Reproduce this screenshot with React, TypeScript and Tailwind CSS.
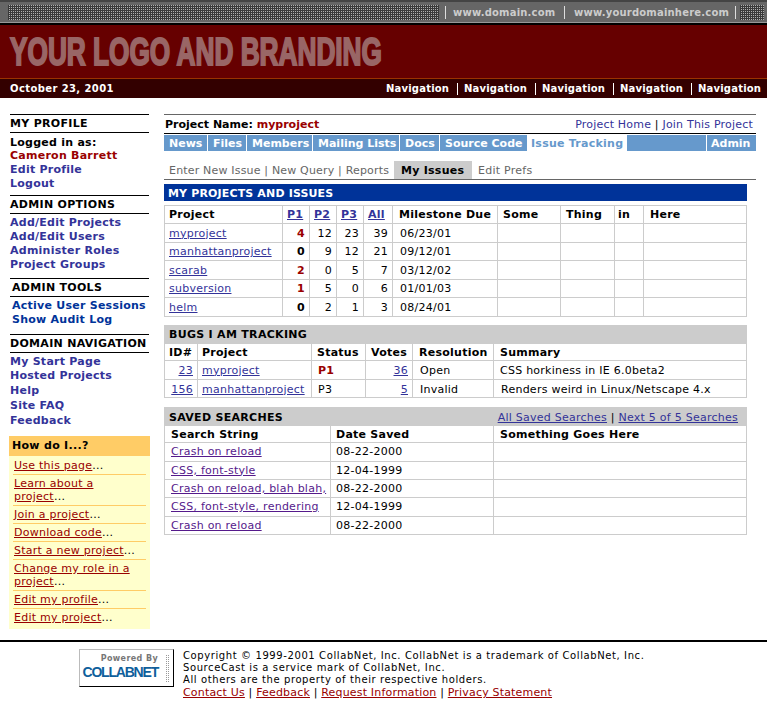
const Side = ({ children, className = "" }: { children: React.ReactNode; className?: string }) => (
  <div className={`h-[14px] leading-[14px] font-bold whitespace-nowrap ${className}`}>{children}</div>
);
const SideHead = ({ children, className = "" }: { children: React.ReactNode; className?: string }) => (
  <div className={`h-[19px] leading-[18px] font-bold text-black border-y border-black tracking-[0.3px] whitespace-nowrap ${className}`}>{children}</div>
);
const Lk = ({ children, className = "" }: { children: React.ReactNode; className?: string }) => (
  <a className={`underline text-[#333399] ${className}`}>{children}</a>
);
const How = ({ lines, last }: { lines: string[]; last?: boolean }) => (
  <div className={`mx-[4px] pl-[1px] leading-[13px] py-[2px] ${last ? "" : "border-b border-[#ffcc66]"}`}>
    <a className="underline text-[#990000]">{lines[0]}{lines[1] && <><br />{lines[1]}</>}</a>...
  </div>
);

const Td = ({ children, className = "" }: { children?: React.ReactNode; className?: string }) => (
  <td className={`border border-[#cccccc] px-[4px] text-black ${className}`}>{children}</td>
);
const Th = ({ children, className = "" }: { children?: React.ReactNode; className?: string }) => (
  <th className={`border border-[#cccccc] px-[4px] font-bold text-left text-black ${className}`}>{children}</th>
);

const projects: [string, string, boolean, string, string, string, string][] = [
  ["myproject", "4", true, "12", "23", "39", "06/23/01"],
  ["manhattanproject", "0", false, "9", "12", "21", "09/12/01"],
  ["scarab", "2", true, "0", "5", "7", "03/12/02"],
  ["subversion", "1", true, "5", "0", "6", "01/01/03"],
  ["helm", "0", false, "2", "1", "3", "08/24/01"],
];
const searches: [string, string][] = [
  ["Crash on reload", "08-22-2000"],
  ["CSS, font-style", "12-04-1999"],
  ["Crash on reload, blah blah,", "08-22-2000"],
  ["CSS, font-style, rendering", "12-04-1999"],
  ["Crash on reload", "08-22-2000"],
];
const tabs: [string, string][] = [
  ["News", "w-[43px]"], ["Files", "w-[38px]"], ["Members", "w-[65px]"], ["Mailing Lists", "w-[86px]"], ["Docs", "w-[39px]"], ["Source Code", "w-[87px]"],
];
const dots = "bg-[conic-gradient(#b0b0b0_25%,#3a3a3a_0)] bg-[length:2px_2px]";

export default function App() {
  return (
    <div className="w-[767px] h-[720px] overflow-hidden bg-white text-[11px] tracking-[0.25px] text-black font-['DejaVu_Sans','Liberation_Sans',sans-serif]">
      {/* top strip */}
      <div className="h-[25px] bg-[#666666] border-t-2 border-t-[#444444] border-b-2 border-b-black shadow-[inset_0_-1px_0_#999999] flex items-center pl-[8px] pr-[3px]">
        <div className={`w-[431px] h-[15px] ${dots}`} />
        <div className="ml-[6px] h-[13px] border-l border-[#dddddd]" />
        <span className="ml-[7px] w-[111px] text-[10px] tracking-[0.2px] font-bold text-[#cccccc] whitespace-nowrap">www.domain.com</span>
        <div className="h-[13px] border-l border-[#dddddd]" />
        <span className="ml-[9px] w-[161px] text-[10px] tracking-[0.2px] font-bold text-[#cccccc] whitespace-nowrap">www.yourdomainhere.com</span>
        <div className="h-[13px] border-l border-[#dddddd]" />
        <div className={`ml-[4px] w-[24px] h-[15px] ${dots}`} />
      </div>
      {/* banner */}
      <div className="h-[54px] bg-[#660000] border-b border-b-[#993300] pl-[10px] overflow-hidden">
        <div className="origin-left scale-x-[0.69] w-[570px] tracking-normal whitespace-nowrap text-[#996666] font-bold text-[38px] leading-[55px] [-webkit-text-stroke:2px_#996666] font-['Liberation_Sans',sans-serif]">YOUR LOGO AND BRANDING</div>
      </div>
      <div className="h-[19px] bg-[#330000] text-white font-bold text-[10px] flex items-center justify-between pl-[10px] pr-[5px] leading-none">
        <span className="tracking-[0.4px]">October 23, 2001</span>
        <span className="flex items-center tracking-[0.2px]">
          {[0, 1, 2, 3, 4].map((i) => (
            <span key={i} className="flex items-center">
              {i > 0 && <span className="ml-[7px] mr-[6px] h-[12px] border-l border-white" />}
              <span className="w-[64px] whitespace-nowrap">Navigation</span>
            </span>
          ))}
        </span>
      </div>

      <div className="flex pt-[16px] h-[544px] border-b-2 border-black">
        {/* sidebar */}
        <div className="ml-[9px] w-[141px] shrink-0 flex flex-col">
          <div className="ml-[1px] w-[139px] text-[#333399]">
            <SideHead>MY PROFILE</SideHead>
            <div className="pt-[3px]" />
            <Side className="text-black !h-[13px]">Logged in as:</Side>
            <Side className="text-[#990000]">Cameron Barrett</Side>
            <Side>Edit Profile</Side>
            <Side>Logout</Side>
            <div className="h-[4px]" />
            <SideHead>ADMIN OPTIONS</SideHead>
            <div className="h-[2px]" />
            <Side>Add/Edit Projects</Side>
            <Side>Add/Edit Users</Side>
            <Side>Administer Roles</Side>
            <Side>Project Groups</Side>
            <div className="h-[6px]" />
            <SideHead className="pl-[2px]">ADMIN TOOLS</SideHead>
            <div className="h-[2px]" />
            <Side className="text-[#003399] pl-[2px]">Active User Sessions</Side>
            <Side className="text-[#003399] pl-[2px]">Show Audit Log</Side>
            <div className="h-[7px]" />
            <SideHead>DOMAIN NAVIGATION</SideHead>
            <div className="h-[2px]" />
            <Side>My Start Page</Side>
            <Side className="h-[15px]">Hosted Projects</Side>
            <Side className="h-[15px]">Help</Side>
            <Side className="h-[15px]">Site FAQ</Side>
            <Side className="h-[15px]">Feedback</Side>
          </div>
          <div className="mt-[7px] h-[193px] bg-[#ffffcc]">
            <div className="h-[20px] bg-[#ffcc66] pl-[3px] font-bold leading-[20px] tracking-[0.3px]">How do I...?</div>
            <div className="h-[1px]" />
            <How lines={["Use this page"]} />
            <How lines={["Learn about a", "project"]} />
            <How lines={["Join a project"]} />
            <How lines={["Download code"]} />
            <How lines={["Start a new project"]} />
            <How lines={["Change my role in a", "project"]} />
            <How lines={["Edit my profile"]} />
            <How lines={["Edit my project"]} last />
          </div>
        </div>

        {/* main */}
        <div className="ml-[14px] w-[592px] shrink-0">
          <div className="h-[20px] border-t border-[#666666] border-b border-b-black flex justify-between items-center pt-[2px] pl-[1px] pr-[3px]">
            <span className="font-bold tracking-normal">Project Name: <span className="text-[#990000]">myproject</span></span>
            <span className="tracking-[0.2px]">
              <a className="text-[#333399]">Project Home</a> | <a className="text-[#333399]">Join This Project</a>
            </span>
          </div>
          <div className="mt-[1px] h-[16px] flex font-bold text-white leading-[18px] tracking-normal">
            {tabs.map(([t, w]) => (
              <div key={t} className={`${w} mr-[1px] bg-[#6699cc] pl-[5px] whitespace-nowrap overflow-hidden`}>{t}</div>
            ))}
            <div className="-ml-[1px] w-[100px] pl-[4px] whitespace-nowrap text-[#6699cc] tracking-[0.25px]">Issue Tracking</div>
            <div className="w-[79px] bg-[#6699cc]" />
            <div className="ml-[1px] w-[49px] bg-[#6699cc] pl-[4px]">Admin</div>
          </div>
          <div className="mt-[10px] h-[19px] border-b border-[#666666] flex items-stretch text-[#666666] pl-[5px] leading-[20px] whitespace-nowrap">
            <span className="w-[225px] tracking-[0.18px]">Enter New Issue | New Query | Reports</span>
            <span className="w-[78px] bg-[#cccccc] text-black font-bold pl-[7px]">My Issues</span>
            <span className="ml-[6px]">Edit Prefs</span>
          </div>
          <div className="mt-[4px] w-[583px] h-[17px] bg-[#003399] text-white font-bold pl-[4px] leading-[19px] tracking-[0.15px]">MY PROJECTS AND ISSUES</div>

          <table className="mt-[4px] w-[583px] table-fixed border-collapse leading-[13px]">
            <colgroup>
              <col className="w-[118px]" /><col className="w-[27px]" /><col className="w-[27px]" /><col className="w-[27px]" /><col className="w-[29px]" /><col className="w-[105px]" /><col className="w-[63px]" /><col className="w-[54px]" /><col className="w-[29px]" /><col className="w-[103px]" />
            </colgroup>
            <tbody>
              <tr className="h-[18px]">
                <Th>Project</Th>
                <Th className="text-center"><Lk>P1</Lk></Th>
                <Th className="text-center"><Lk>P2</Lk></Th>
                <Th className="text-center"><Lk>P3</Lk></Th>
                <Th className="text-center"><Lk>All</Lk></Th>
                <Th className="px-[6px] whitespace-nowrap">Milestone Due</Th>
                <Th className="px-[5px]">Some</Th>
                <Th className="px-[5px]">Thing</Th>
                <Th className="!px-[3px]">in</Th>
                <Th className="px-[6px]">Here</Th>
              </tr>
              {projects.map(([n, p1, red, p2, p3, all, d], i) => (
                <tr key={n} className={i % 2 === 0 ? "h-[19px]" : "h-[18px]"}>
                  <Td className="whitespace-nowrap"><Lk>{n}</Lk></Td>
                  <Td className={`text-right font-bold ${red ? "!text-[#990000]" : ""}`}>{p1}</Td>
                  <Td className="text-right">{p2}</Td>
                  <Td className="text-right">{p3}</Td>
                  <Td className="text-right">{all}</Td>
                  <Td className="px-[7px]">{d}</Td>
                  <Td /><Td /><Td /><Td />
                </tr>
              ))}
            </tbody>
          </table>

          <div className="mt-[8px] w-[583px] h-[18px] bg-[#cccccc] font-bold pl-[5px] leading-[20px] tracking-[0.3px]">BUGS I AM TRACKING</div>
          <table className="w-[583px] table-fixed border-collapse leading-[13px]">
            <colgroup>
              <col className="w-[33px]" /><col className="w-[114px]" /><col className="w-[54px]" /><col className="w-[47px]" /><col className="w-[81px]" /><col />
            </colgroup>
            <tbody>
              <tr className="h-[17px]">
                <Th>ID#</Th><Th>Project</Th><Th className="px-[5px]">Status</Th><Th className="px-[5px]">Votes</Th><Th className="px-[6px]">Resolution</Th><Th className="px-[6px]">Summary</Th>
              </tr>
              <tr className="h-[19px]">
                <Td className="text-right"><Lk>23</Lk></Td><Td><Lk>myproject</Lk></Td><Td className="px-[6px] font-bold !text-[#990000]">P1</Td><Td className="text-right"><Lk>36</Lk></Td><Td className="px-[7px]">Open</Td><Td className="px-[6px] whitespace-nowrap">CSS horkiness in IE 6.0beta2</Td>
              </tr>
              <tr className="h-[18px]">
                <Td className="pt-[1px] text-right"><Lk>156</Lk></Td><Td className="pt-[1px]"><Lk>manhattanproject</Lk></Td><Td className="pt-[1px] px-[6px]">P3</Td><Td className="pt-[1px] text-right"><Lk>5</Lk></Td><Td className="pt-[1px] px-[7px]">Invalid</Td><Td className="pt-[1px] px-[7px] whitespace-nowrap">Renders weird in Linux/Netscape 4.x</Td>
              </tr>
            </tbody>
          </table>

          <div className="mt-[9px] w-[583px] h-[18px] bg-[#cccccc] flex justify-between pl-[5px] pr-[9px] leading-[21px]">
            <span className="font-bold tracking-[0.3px]">SAVED SEARCHES</span>
            <span className="whitespace-nowrap"><Lk>All Saved Searches</Lk> | <Lk>Next 5 of 5 Searches</Lk></span>
          </div>
          <table className="w-[583px] table-fixed border-collapse leading-[13px]">
            <colgroup><col className="w-[166px]" /><col className="w-[163px]" /><col /></colgroup>
            <tbody>
              <tr className="h-[17px]">
                <Th className="px-[6px]">Search String</Th><Th className="px-[5px]">Date Saved</Th><Th className="px-[6px]">Something Goes Here</Th>
              </tr>
              {searches.map(([s, d], i) => (
                <tr key={i} className={i === 1 || i === 2 || i === 4 ? "h-[18px]" : "h-[19px]"}>
                  <Td className="pb-[1px] px-[6px] whitespace-nowrap overflow-hidden"><a className="underline text-[#551a8b]">{s}</a></Td>
                  <Td className="pb-[1px] px-[5px]">{d}</Td>
                  <Td />
                </tr>
              ))}
            </tbody>
          </table>
        </div>
      </div>

      {/* footer */}
      <div className="flex pt-[7px] pl-[79px]">
        <div className="relative w-[95px] h-[38px] bg-white border border-[#bbbbbb] border-r-black border-b-black shrink-0 flex flex-col items-end pr-[15px] pt-[3px] overflow-hidden tracking-normal">
          <span className="text-[8px] leading-[12px] font-bold text-[#777777] tracking-[0.4px]">Powered By</span>
          <span className="text-[14px] leading-[14px] font-bold text-[#0f5f9c] tracking-[-1.2px] font-['Liberation_Sans',sans-serif]">COLLABNET</span>
          <div className="absolute right-[3px] top-[5px] w-[5px] h-[28px] bg-[conic-gradient(#999999_25%,#ffffff_0)] bg-[length:2px_2px]" />
        </div>
        <div className="ml-[9px] leading-[12px] whitespace-nowrap pt-[1px] text-[10px] tracking-[0.6px]">
          <div>Copyright © 1999-2001 CollabNet, Inc. CollabNet is a trademark of CollabNet, Inc.</div>
          <div>SourceCast is a service mark of CollabNet, Inc.</div>
          <div>All others are the property of their respective holders.</div>
          <div className="leading-[13px] text-[11px] tracking-[0.18px]">
            <a className="underline text-[#990000]">Contact Us</a> | <a className="underline text-[#990000]">Feedback</a> | <a className="underline text-[#990000]">Request Information</a> | <a className="underline text-[#990000]">Privacy Statement</a>
          </div>
        </div>
      </div>
    </div>
  );
}
